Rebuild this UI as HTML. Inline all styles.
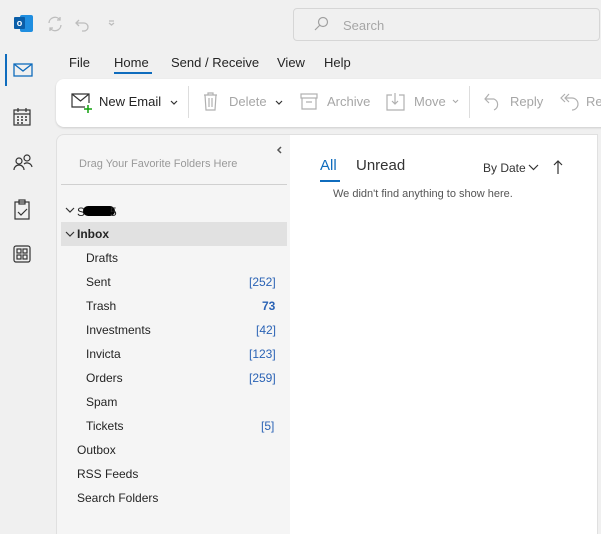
<!DOCTYPE html>
<html><head><style>
*{margin:0;padding:0;box-sizing:border-box}
body{width:601px;height:522px;background:#f0f0f0;font-family:"Liberation Sans",sans-serif;position:relative;overflow:hidden;font-size:12px;color:#242424}
.a{position:absolute}
.tab{position:absolute;top:55px;font-size:13px;color:#242424}
.rib{position:absolute;left:56px;top:79px;width:560px;height:48px;background:#fff;border-radius:8px;box-shadow:0 1px 2px rgba(0,0,0,.15)}
.rt{position:absolute;top:15px;font-size:13px;color:#a6a6a6}
.fp{position:absolute;left:56px;top:134px;width:234px;height:400px;background:#f5f5f5;border-radius:8px 0 0 0;border-top:1px solid #e0e0e0;border-left:1px solid #e0e0e0}
.f{position:absolute;font-size:12px;color:#242424}
.n{position:absolute;font-size:12px;color:#2b63b5}
</style></head><body>
<!-- outlook logo -->
<div class="a" style="left:20px;top:15px;width:13px;height:17px;background:#1f8ee0;border-radius:2px"></div>
<div class="a" style="left:14px;top:17px;width:11px;height:12px;background:#0a5ea8;color:#fff;font-size:9px;font-weight:bold;text-align:center;line-height:12px;border-radius:1px">o</div>
<svg class="a" style="left:45px;top:14px" width="70" height="20" fill="none" stroke="#bdbdbd" stroke-width="1.3">
<path d="M4 9a6 6 0 0 1 11-3M16 11a6 6 0 0 1-11 3M15 3v3h-3M5 17v-3h3"/>
<path d="M34 6l-3 3 3 3M31 9h8a4 4 0 0 1 0 8h-2"/>
<path d="M64 7h5M64 9l2.5 2 2.5-2"/>
</svg>
<div class="a" style="left:293px;top:8px;width:307px;height:33px;border:1px solid #d6d6d6;border-radius:4px;background:#f0f0f0"></div>
<svg class="a" style="left:313px;top:16px" width="16" height="16" fill="none" stroke="#a0a0a0" stroke-width="1.2"><circle cx="10" cy="6" r="4.5"/><path d="M7 9l-5 5"/></svg>
<div class="a" style="left:343px;top:18px;font-size:13px;color:#a6a6a6">Search</div>
<!-- left nav -->
<div class="a" style="left:5px;top:54px;width:2px;height:32px;background:#0f6cbd"></div>
<svg class="a" style="left:13px;top:60px" width="22" height="20" fill="none" stroke="#0f6cbd" stroke-width="1.3"><rect x="1" y="4" width="18" height="12"/><path d="M1 4l9 7 9-7"/></svg>
<svg class="a" style="left:13px;top:107px" width="20" height="20" fill="none" stroke="#333" stroke-width="1.2"><rect x="1" y="3" width="16" height="15"/><path d="M1 7h16M5 1v4M13 1v4"/><path d="M4 10h2M8 10h2M12 10h2M4 13h2M8 13h2M12 13h2M4 16h2M8 16h2" stroke-width="1.5"/></svg>
<svg class="a" style="left:12px;top:153px" width="22" height="20" fill="none" stroke="#333" stroke-width="1.2"><circle cx="7" cy="8" r="3"/><path d="M2 17a5 5 0 0 1 10 0"/><circle cx="15" cy="5" r="3"/><path d="M12 11a5 5 0 0 1 8 3"/></svg>
<svg class="a" style="left:14px;top:199px" width="18" height="22" fill="none" stroke="#333" stroke-width="1.2"><rect x="1" y="3" width="14" height="17"/><rect x="5" y="1" width="6" height="4"/><path d="M4 13l3 3 6-6"/></svg>
<svg class="a" style="left:13px;top:245px" width="20" height="20" fill="none" stroke="#333" stroke-width="1.2"><rect x="1" y="1" width="16" height="16" rx="2"/><rect x="4" y="4" width="4" height="4"/><rect x="10" y="4" width="4" height="4"/><rect x="4" y="10" width="4" height="4"/><rect x="10" y="10" width="4" height="4"/></svg>
<!-- tabs -->
<div class="tab" style="left:69px">File</div>
<div class="tab" style="left:114px">Home</div>
<div class="a" style="left:114px;top:72px;width:38px;height:2px;background:#0f6cbd"></div>
<div class="tab" style="left:171px">Send / Receive</div>
<div class="tab" style="left:277px">View</div>
<div class="tab" style="left:324px">Help</div>
<div class="rib">
<svg class="a" style="left:15px;top:14px" width="22" height="20" fill="none" stroke="#333" stroke-width="1.2"><path d="M14 14H1V1h17v9"/><path d="M1 1l8.5 7L18 1"/><path d="M17 12v8M13 16h8" stroke="#13a10e" stroke-width="1.5"/></svg>
<div class="a" style="left:43px;top:15px;font-size:13px;color:#242424">New Email</div>
<svg class="a" style="left:114px;top:21px" width="8" height="5" fill="none" stroke="#333" stroke-width="1.2"><path d="M1 1l3 3 3-3"/></svg>
<div class="a" style="left:132px;top:7px;width:1px;height:32px;background:#ddd"></div>
<svg class="a" style="left:147px;top:13px" width="16" height="20" fill="none" stroke="#b0b0b0" stroke-width="1.2"><path d="M1 3h13M5 3V1h5v2M2 3l1 15h9l1-15M6 6v9M9 6v9"/></svg>
<div class="rt" style="left:173px">Delete</div>
<svg class="a" style="left:219px;top:21px" width="8" height="5" fill="none" stroke="#333" stroke-width="1.2"><path d="M1 1l3 3 3-3"/></svg>
<svg class="a" style="left:244px;top:14px" width="18" height="18" fill="none" stroke="#b0b0b0" stroke-width="1.2"><rect x="1" y="1" width="16" height="4"/><path d="M2 5v11h14V5M6 9h6"/></svg>
<div class="rt" style="left:271px">Archive</div>
<svg class="a" style="left:330px;top:13px" width="20" height="20" fill="none" stroke="#b0b0b0" stroke-width="1.2"><path d="M6 3H1v15h17V3h-5M9 1v11M6 9l3 3 3-3"/></svg>
<div class="rt" style="left:358px">Move</div>
<svg class="a" style="left:396px;top:20px" width="7" height="5" fill="none" stroke="#aaa" stroke-width="1.1"><path d="M1 1l2.5 2.5L6 1"/></svg>
<div class="a" style="left:413px;top:7px;width:1px;height:32px;background:#ddd"></div>
<svg class="a" style="left:427px;top:13px" width="20" height="20" fill="none" stroke="#b0b0b0" stroke-width="1.2"><path d="M6 2L2 7l4 4M2 7h9a6 6 0 0 1 0 11"/></svg>
<div class="rt" style="left:454px">Reply</div>
<svg class="a" style="left:503px;top:13px" width="24" height="20" fill="none" stroke="#b0b0b0" stroke-width="1.2"><path d="M6 2L2 6l4 4M10 2L6 6l4 4M6 6h7a6 6 0 0 1 0 12"/></svg>
<div class="rt" style="left:530px">Re</div>
</div>
<!-- folder pane -->
<div class="fp">
<svg class="a" style="left:219px;top:11px" width="6" height="8" fill="none" stroke="#555" stroke-width="1.5"><path d="M5 1L2 4l3 3"/></svg>
<div class="a" style="left:22px;top:23px;font-size:11px;color:#999">Drag Your Favorite Folders Here</div>
<div class="a" style="left:4px;top:49px;width:226px;height:1px;background:#d0d0d0"></div>
</div>
<svg class="a" style="left:65px;top:207px" width="10" height="6" fill="none" stroke="#333" stroke-width="1.2"><path d="M1 1l4 4 4-4"/></svg>
<div class="f" style="left:77px;top:205px">S</div>
<div class="a" style="left:83px;top:206px;width:32px;height:10px;background:#000;border-radius:5px"></div>
<div class="f" style="left:110px;top:205px">5</div>
<div class="a" style="left:61px;top:222px;width:226px;height:24px;background:#e1e1e1"></div>
<svg class="a" style="left:65px;top:231px" width="10" height="6" fill="none" stroke="#333" stroke-width="1.2"><path d="M1 1l4 4 4-4"/></svg>
<div class="f" style="left:77px;top:227px;font-weight:bold">Inbox</div>
<div class="f" style="left:86px;top:251px">Drafts</div>
<div class="f" style="left:86px;top:275px">Sent</div><div class="n" style="top:275px;left:249px">[252]</div>
<div class="f" style="left:86px;top:299px">Trash</div><div class="n" style="top:299px;left:262px;font-weight:bold">73</div>
<div class="f" style="left:86px;top:323px">Investments</div><div class="n" style="top:323px;left:256px">[42]</div>
<div class="f" style="left:86px;top:347px">Invicta</div><div class="n" style="top:347px;left:249px">[123]</div>
<div class="f" style="left:86px;top:371px">Orders</div><div class="n" style="top:371px;left:249px">[259]</div>
<div class="f" style="left:86px;top:395px">Spam</div>
<div class="f" style="left:86px;top:419px">Tickets</div><div class="n" style="top:419px;left:261px">[5]</div>
<div class="f" style="left:77px;top:443px">Outbox</div>
<div class="f" style="left:77px;top:467px">RSS Feeds</div>
<div class="f" style="left:77px;top:491px">Search Folders</div>
<!-- message pane -->
<div class="a" style="left:290px;top:134px;width:308px;height:400px;background:#fff;border-right:1px solid #e0e0e0;border-top:1px solid #e0e0e0"></div>
<div class="a" style="left:320px;top:157px;font-size:15px;color:#0f6cbd">All</div>
<div class="a" style="left:320px;top:180px;width:20px;height:2px;background:#0f6cbd"></div>
<div class="a" style="left:356px;top:157px;font-size:15px;color:#333">Unread</div>
<div class="a" style="left:483px;top:161px;font-size:12px;color:#333">By Date</div>
<svg class="a" style="left:528px;top:164px" width="12" height="8" fill="none" stroke="#333" stroke-width="1.2"><path d="M1 1l4.5 4.5L10 1"/></svg>
<svg class="a" style="left:553px;top:160px" width="10" height="15" fill="none" stroke="#333" stroke-width="1.2"><path d="M5 14V1M1 5l4-4 4 4"/></svg>
<div class="a" style="left:333px;top:188px;font-size:11px;color:#555">We didn't find anything to show here.</div>
</body></html>
